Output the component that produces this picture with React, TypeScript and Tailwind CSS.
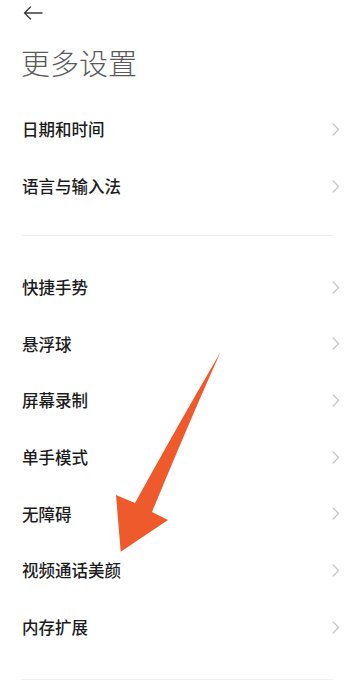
import React from "react";

const Chevron = () => (
  <svg width="8" height="13" viewBox="0 0 8 13" fill="none" className="shrink-0">
    <path d="M1.2 1 L6.6 6.5 L1.2 12" stroke="#c9c9c9" strokeWidth="1.3" strokeLinecap="round" strokeLinejoin="round" />
  </svg>
);

const Row = ({ label, h }: { label: string; h: string }) => (
  <div className={`flex items-center justify-between pl-[22px] pr-[14px] ${h}`}>
    <span className="text-[16.5px] leading-[16.5px] font-medium text-[#1c1c1c] tracking-[0px]">{label}</span>
    <Chevron />
  </div>
);

export default function App() {
  const group2 = ["快捷手势", "悬浮球", "屏幕录制", "单手模式", "无障碍", "视频通话美颜", "内存扩展"];
  return (
    <div
      className="relative w-full h-[686px] bg-white overflow-hidden"
      style={{ fontFamily: '"Noto Sans CJK SC", "Noto Sans", sans-serif' }}
    >
      <div className="h-[26px] flex items-center pl-[22px]">
        <svg width="22" height="14" viewBox="0 0 22 14" fill="none">
          <path d="M20 7 H2.5 M8.5 1 L2.5 7 L8.5 13" stroke="#3a3a3a" strokeWidth="1.4" strokeLinecap="round" strokeLinejoin="round" />
        </svg>
      </div>
      <div className="h-[75px] flex items-center pl-[21px] pb-[2px]">
        <span className="text-[29px] leading-[29px] font-light text-[#5a5a5a]">更多设置</span>
      </div>
      <Row label="日期和时间" h="h-[57px]" />
      <Row label="语言与输入法" h="h-[57px]" />
      <div className="h-[20px]" />
      <div className="mx-[21px] h-px bg-[#f0f0f0]" />
      <div className="h-[23px]" />
      {group2.map((l) => (
        <Row key={l} label={l} h="h-[56.67px]" />
      ))}
      <div className="h-[23px]" />
      <div className="mx-[21px] h-px bg-[#f0f0f0]" />

      <svg
        className="absolute left-0 top-0 pointer-events-none"
        width="354"
        height="686"
        viewBox="0 0 354 686"
      >
        <path
          d="M220.7 351.7 Q190 420 152 512 L168 520 L120.7 551.7 L116 495 L135 503 Q175 430 220.7 351.7 Z"
          fill="#ee5a2c"
        />
      </svg>
    </div>
  );
}
